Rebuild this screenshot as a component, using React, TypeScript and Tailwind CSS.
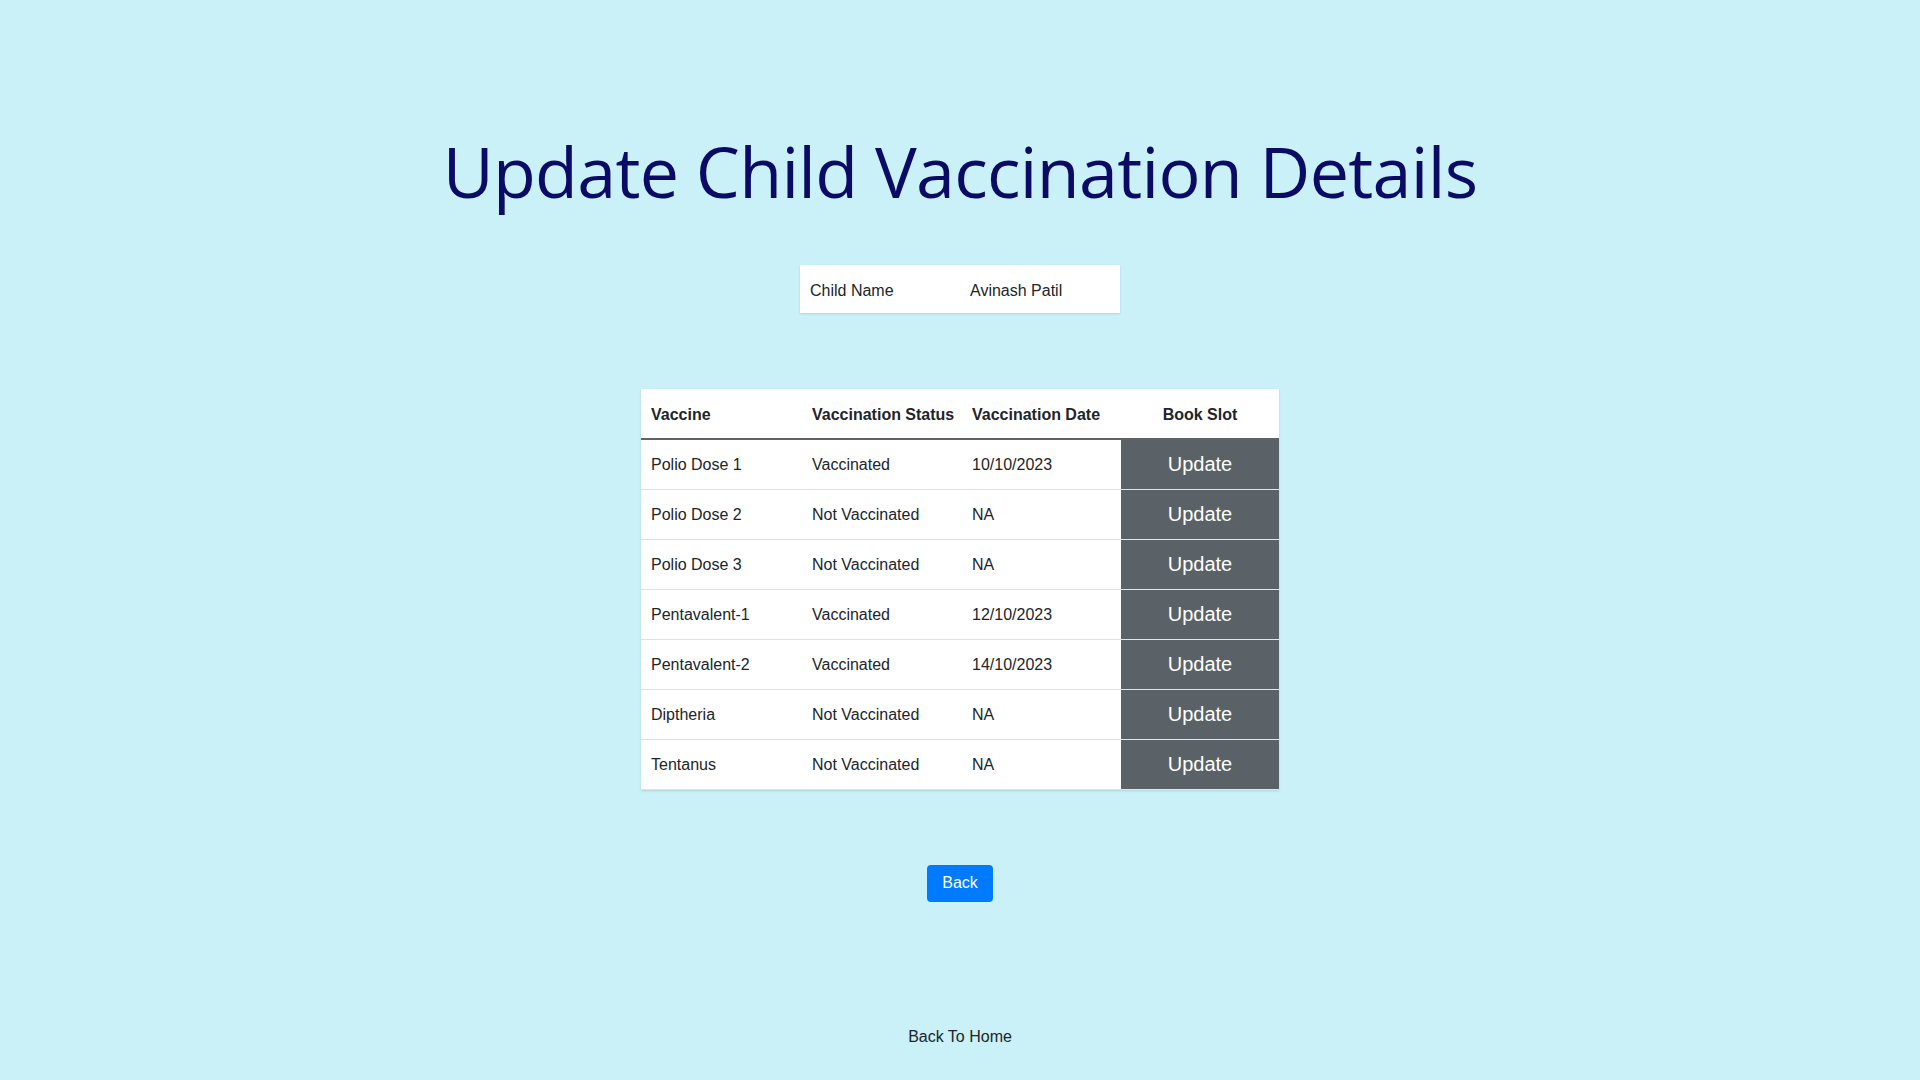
import React from "react";

const rows = [
  { name: "Polio Dose 1", status: "Vaccinated", date: "10/10/2023" },
  { name: "Polio Dose 2", status: "Not Vaccinated", date: "NA" },
  { name: "Polio Dose 3", status: "Not Vaccinated", date: "NA" },
  { name: "Pentavalent-1", status: "Vaccinated", date: "12/10/2023" },
  { name: "Pentavalent-2", status: "Vaccinated", date: "14/10/2023" },
  { name: "Diptheria", status: "Not Vaccinated", date: "NA" },
  { name: "Tentanus", status: "Not Vaccinated", date: "NA" },
];

const App: React.FC = () => {
  return (
    <div className="min-h-screen w-full bg-[#caf0f8] flex flex-col items-center font-['Liberation_Sans',Arial,sans-serif] text-[#212529]">
      {/* Title */}
      <h1 className="mt-[125px] text-[70px] leading-[92px] text-[#0b0b66] font-['Open_Sans',sans-serif] font-normal tracking-[-0.7px]">
        Update Child Vaccination Details
      </h1>

      {/* Child name */}
      <div className="mt-[48px] w-[320px] h-[48px] flex items-center pt-[3px] bg-white shadow-[0_1px_2px_rgba(0,0,0,0.12)] text-[16px]">
        <div className="w-[160px] pl-[10px]">Child Name</div>
        <div className="w-[160px] pl-[10px]">Avinash Patil</div>
      </div>

      {/* Vaccination table */}
      <table className="mt-[76px] w-[638px] table-fixed border-collapse bg-white text-[16px] shadow-[0_1px_2px_rgba(0,0,0,0.12)]">
        <thead>
          <tr className="h-[50px] border-b-2 border-[#5f6368]">
            <th className="w-[161px] pl-[10px] pt-[3px] text-left font-bold">Vaccine</th>
            <th className="w-[160px] pl-[10px] pt-[3px] text-left font-bold">Vaccination Status</th>
            <th className="w-[159px] pl-[10px] pt-[3px] text-left font-bold">Vaccination Date</th>
            <th className="w-[158px] pt-[3px] text-center font-bold">Book Slot</th>
          </tr>
        </thead>
        <tbody>
          {rows.map((r) => (
            <tr key={r.name} className="h-[50px] border-b border-[#dee2e6]">
              <td className="pl-[10px] pt-[2px]">{r.name}</td>
              <td className="pl-[10px] pt-[2px]">{r.status}</td>
              <td className="pl-[10px] pt-[2px]">{r.date}</td>
              <td className="p-0 h-[50px] bg-[#5a6268] border-b border-[#caf0f8]">
                <button className="w-full h-full text-white text-[20px] leading-none">Update</button>
              </td>
            </tr>
          ))}
        </tbody>
      </table>

      {/* Back */}
      <button className="mt-[75px] h-[37px] px-[15px] rounded-[4px] bg-[#007bff] text-white text-[16px]">
        Back
      </button>

      <a className="mt-[123px] text-[16px] leading-[24px] text-[#212529]">Back To Home</a>
    </div>
  );
};

export default App;
